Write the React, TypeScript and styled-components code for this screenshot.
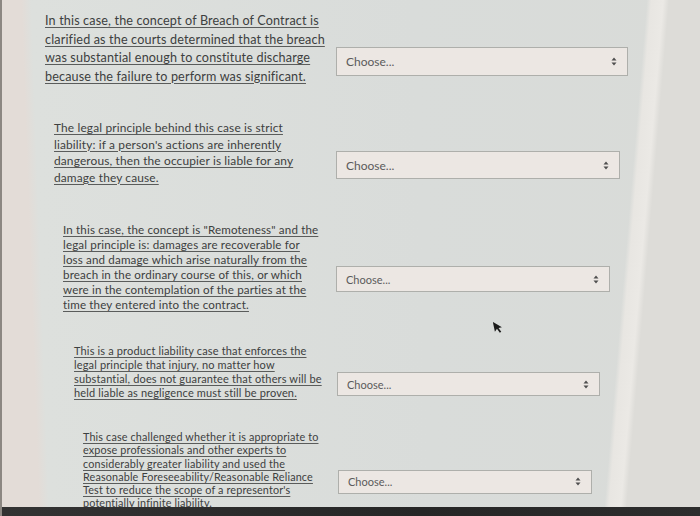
import React from "react";
import styled, { createGlobalStyle } from "styled-components";

const GlobalStyle = createGlobalStyle`
  html, body { margin: 0; padding: 0; background: #2a2a2a; }
  * { box-sizing: border-box; }
`;

type Item = {
  lines: string[];
  indent: number;
  size: number;
  lh: number;
  gap: number;
  pickW: number;
  pickH: number;
  pickX: number;
};

const items: Item[] = [
  {
    lines: [
      "In this case, the concept of Breach of Contract is",
      "clarified as the courts determined that the breach",
      "was substantial enough to constitute discharge",
      "because the failure to perform was significant.",
    ],
    indent: 43,
    size: 12.6,
    lh: 18.5,
    gap: 12,
    pickW: 292,
    pickH: 29,
    pickX: 0,
  },
  {
    lines: [
      "The legal principle behind this case is strict",
      "liability: if a person's actions are inherently",
      "dangerous, then the occupier is liable for any",
      "damage they cause.",
    ],
    indent: 52,
    size: 11.9,
    lh: 16.5,
    gap: 34,
    pickW: 284,
    pickH: 28,
    pickX: 0,
  },
  {
    lines: [
      "In this case, the concept is \"Remoteness\" and the",
      "legal principle is: damages are recoverable for",
      "loss and damage which arise naturally from the",
      "breach in the ordinary course of this, or which",
      "were in the contemplation of the parties at the",
      "time they entered into the contract.",
    ],
    indent: 61,
    size: 11.6,
    lh: 15,
    gap: 36,
    pickW: 274,
    pickH: 26,
    pickX: 0,
  },
  {
    lines: [
      "This is a product liability case that enforces the",
      "legal principle that injury, no matter how",
      "substantial, does not guarantee that others will be",
      "held liable as negligence must still be proven.",
    ],
    indent: 72,
    size: 11,
    lh: 14,
    gap: 32,
    pickW: 263,
    pickH: 24,
    pickX: 1,
  },
  {
    lines: [
      "This case challenged whether it is appropriate to",
      "expose professionals and other experts to",
      "considerably greater liability and used the",
      "Reasonable Foreseeability/Reasonable Reliance",
      "Test to reduce the scope of a representor's",
      "potentially infinite liability.",
    ],
    indent: 81,
    size: 10.8,
    lh: 13.3,
    gap: 30,
    pickW: 254,
    pickH: 24,
    pickX: 2,
  },
];

// The monitor surface: a pale reflection down the left edge and a light
// strip where the browser window meets the desktop on the right.
const Screen = styled.div`
  position: relative;
  width: 700px;
  height: 516px;
  display: flex;
  flex-direction: column;
  overflow: hidden;
  border-left: 2px solid #8c8782;
  background:
    linear-gradient(94.8deg, transparent 0 87%, #e8e6e2 87.6%, #ebe9e5 89.2%, #dddcd8 90%),
    linear-gradient(88deg, #e3dcd7 0 5.2%, #dde0dd 6.6%, #d9dcda 60%, #d9dbd8 100%);
`;

const Content = styled.main`
  flex: 1;
  min-height: 0;
  overflow: hidden;
  font-family: "Lato", "Open Sans", sans-serif;
`;

const Row = styled.section<{ $gap: number }>`
  display: grid;
  grid-template-columns: 334px auto;
  align-items: center;
  margin-top: ${(p) => p.$gap}px;
`;

const Prompt = styled.p<{ $indent: number; $size: number; $lh: number }>`
  margin: 0;
  padding-left: ${(p) => p.$indent}px;
  font-size: ${(p) => p.$size}px;
  line-height: ${(p) => p.$lh}px;
  color: #3d4040;
  letter-spacing: 0.15px;
  white-space: nowrap;
`;

const Underlined = styled.span`
  text-decoration: underline;
  text-decoration-color: #5a5c5b;
  text-decoration-thickness: 1px;
  text-underline-offset: 2px;
`;

const Picker = styled.div<{ $w: number; $h: number; $x: number }>`
  display: flex;
  align-items: center;
  justify-content: space-between;
  width: ${(p) => p.$w}px;
  height: ${(p) => p.$h}px;
  margin-top: 24px;
  margin-left: ${(p) => p.$x}px;
  padding: 0 10px 0 9px;
  background: #ece7e3;
  border: 1px solid #aeafab;
  color: #5b5b5b;
  font-family: "Lato", "Open Sans", sans-serif;
  font-size: ${(p) => (p.$h > 27 ? 12 : 11)}px;
`;

const Arrows = styled.svg`
  width: 6px;
  height: 9px;
  flex: none;
`;

const Bezel = styled.footer`
  height: 9px;
  flex: none;
  background: linear-gradient(to right, #333333, #262626 60%, #2d2d2d);
`;

const Pointer = styled.svg`
  position: absolute;
  left: 491px;
  top: 320px;
  width: 10px;
  height: 14px;
`;

function Select({ w, h, x }: { w: number; h: number; x: number }) {
  return (
    <Picker $w={w} $h={h} $x={x}>
      <span>Choose...</span>
      <Arrows viewBox="0 0 6 9">
        <path d="M3 0.5 L5.5 3.5 H0.5 Z M3 8.5 L5.5 5.5 H0.5 Z" fill="#4f4f4f" />
      </Arrows>
    </Picker>
  );
}

export default function App() {
  return (
    <>
      <GlobalStyle />
      <Screen>
        <Content>
          {items.map((it, i) => (
            <Row key={i} $gap={it.gap}>
              <Prompt $indent={it.indent} $size={it.size} $lh={it.lh}>
                <Underlined>
                  {it.lines.map((l, j) => (
                    <React.Fragment key={j}>
                      {l}
                      {j < it.lines.length - 1 && <br />}
                    </React.Fragment>
                  ))}
                </Underlined>
              </Prompt>
              <Select w={it.pickW} h={it.pickH} x={it.pickX} />
            </Row>
          ))}
        </Content>
        <Bezel />
        <Pointer viewBox="0 0 10 14">
          <path
            d="M1 1 L1 11 L3.6 8.6 L5.6 13 L7.2 12.3 L5.3 8 L8.8 8 Z"
            fill="#1b1b1b"
            transform="rotate(-12 5 7)"
          />
        </Pointer>
      </Screen>
    </>
  );
}
